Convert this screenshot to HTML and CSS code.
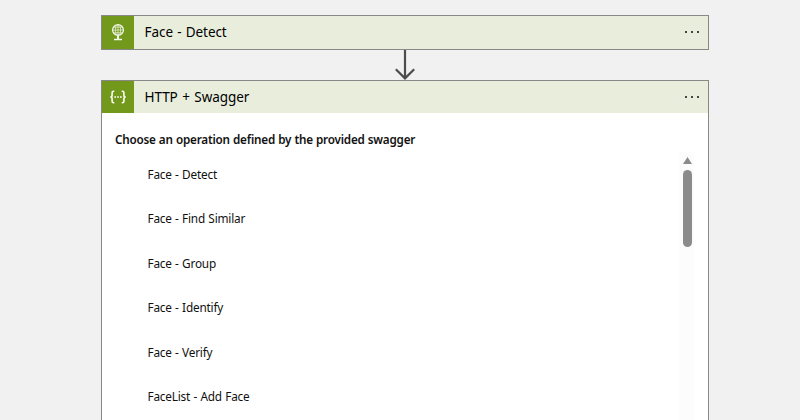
FILE: index.html
```
<!DOCTYPE html>
<html lang="en">
<head>
<meta charset="utf-8">
<title>Workflow designer</title>
<link rel="stylesheet" href="styles.css">
</head>
<body>
<main class="flow">
  <section class="card">
    <header class="card-header card-header-tall">
      <span class="card-icon">
        <svg width="32" height="33" viewBox="0 0 32 33" fill="none" stroke="#f1f6e6">
          <circle cx="16" cy="14" r="5.400" stroke-width="1.300"/>
          <path d="M16 9v10M11 14h10M12 11.200h8M12 16.800h8" stroke-width=".7"/>
          <ellipse cx="16" cy="14" rx="2.600" ry="5" stroke-width=".7"/>
          <path d="M16 20v3" stroke-width="2"/>
          <path d="M12 23.500h8" stroke-width="1.500"/>
        </svg>
      </span>
      <h2 class="card-title">Face - Detect</h2>
      <span class="more"><i></i><i></i><i></i></span>
    </header>
  </section>
  <svg class="arrow" width="22" height="30" viewBox="0 0 22 30" fill="none" stroke="#4c4c4c" stroke-width="2.200">
    <path d="M11 0v29M1.800 19.200l9.200 9.200 9.200-9.200"/>
  </svg>
  <section class="card card-open">
    <header class="card-header">
      <span class="card-icon">
        <svg width="32" height="32" viewBox="0 0 32 32" fill="none" stroke="#fbfdf6" stroke-width="1.600">
          <path d="M12.300 10.200h-.7q-1.500 0-1.500 1.500v2.500q0 1.800-1.800 1.800 1.800 0 1.800 1.800v2.500q0 1.500 1.500 1.500h.7M19.700 10.200h.7q1.500 0 1.500 1.500v2.500q0 1.800 1.800 1.800-1.800 0-1.800 1.800v2.500q0 1.500-1.500 1.500h-.7"/>
          <path d="M12.300 16h1.700M15.150 16h1.700M18 16h1.700"/>
        </svg>
      </span>
      <h2 class="card-title card-title-wide">HTTP + Swagger</h2>
      <span class="more"><i></i><i></i><i></i></span>
    </header>
    <div class="card-body">
      <h3 class="prompt">Choose an operation defined by the provided swagger</h3>
      <div class="list">
        <ul class="operations">
          <li>Face - Detect</li>
          <li>Face - Find Similar</li>
          <li>Face - Group</li>
          <li>Face - Identify</li>
          <li>Face - Verify</li>
          <li>FaceList - Add Face</li>
        </ul>
        <div class="scrollbar">
          <svg width="9" height="7" viewBox="0 0 9 7"><path d="M4.500 0 9 7H0z" fill="#8b8b8b"/></svg>
          <span class="thumb"></span>
        </div>
      </div>
    </div>
  </section>
</main>
</body>
</html>
```
FILE: styles.css
```
* { box-sizing: border-box; }
body {
  margin: 0;
  height: 420px;
  overflow: hidden;
  background: #f1f1f1;
  color: #111;
  font-family: "Noto Sans", "Open Sans", sans-serif;
}
.flow {
  display: flex;
  flex-direction: column;
  width: 608px;
  margin-left: 101px;
  padding-top: 15px;
}
.card {
  border: 1px solid #8a8886;
  background: #fff;
}
.card-open { height: 360px; }
.card-header {
  display: flex;
  align-items: center;
  height: 32px;
  background: #e9eedc;
}
.card-header-tall { height: 33px; }
.card-header-tall .card-title { padding-bottom: 2px; }
.card-header-tall .more { padding-bottom: 1px; }
.card-icon {
  display: flex;
  width: 32px;
  height: 100%;
  background: #72981c;
}
.card-title {
  flex: 1;
  margin: 0 0 0 10.5px;
  font-size: 13.5px;
  line-height: 20px;
  font-weight: 400;
  word-spacing: 0.8px;
  letter-spacing: -0.06px;
  color: #000;
}
.card-title-wide { word-spacing: 1px; }
.more {
  display: flex;
  gap: 4px;
  margin-right: 9px;
}
.more i {
  width: 2px;
  height: 2px;
  background: #444;
}
.arrow {
  display: block;
  margin-left: 293px;
}
.card-body { padding: 17px 14px 0 13px; }
.prompt {
  margin: 0;
  font-size: 11.7px;
  line-height: 18px;
  font-weight: 600;
  letter-spacing: -0.2px;
  word-spacing: 0.3px;
}
.list {
  display: flex;
  justify-content: space-between;
  margin-top: 4px;
}
.operations {
  margin: 0;
  padding: 0 0 0 32.5px;
  list-style: none;
  font-size: 11.8px;
  line-height: 44.4px;
  letter-spacing: -0.2px;
  word-spacing: 0.5px;
}
.scrollbar {
  display: flex;
  flex-direction: column;
  align-items: center;
  width: 15px;
  height: 270px;
  padding: 5px 0 0 1px;
  background: #fcfcfc;
}
.thumb {
  width: 9px;
  height: 77px;
  margin-top: 6px;
  border-radius: 5px;
  background: #8b8b8b;
}
.scrollbar > * { margin-left: 1px; }
```
